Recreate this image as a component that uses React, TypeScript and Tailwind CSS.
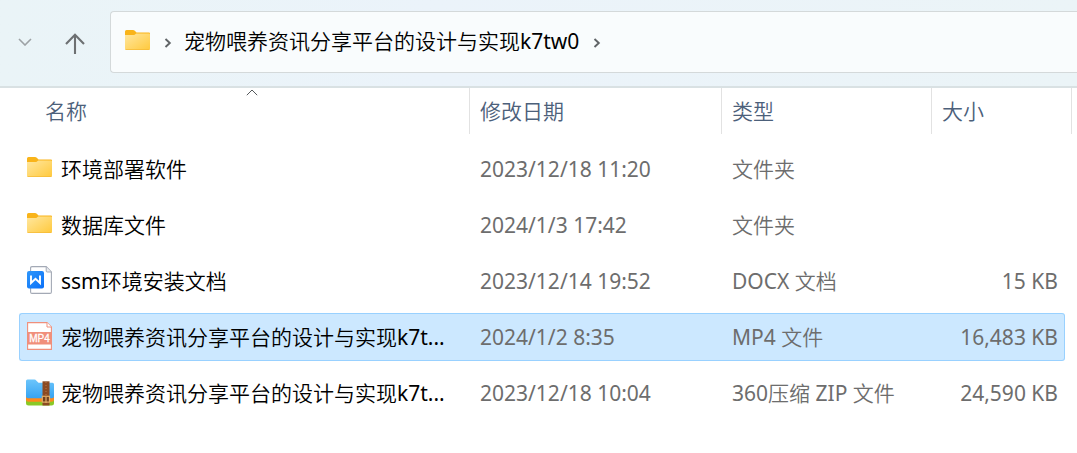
import type { ReactNode } from "react";

const FolderIcon = () => (
  <svg viewBox="0 0 25 20" className="mb-0.5 h-5 w-[25px] shrink-0" aria-hidden="true">
    <defs>
      <linearGradient id="folder-front" x1="0" y1="0" x2="1" y2="1">
        <stop offset="0" stopColor="#ffe7a0" />
        <stop offset="1" stopColor="#ffc93c" />
      </linearGradient>
    </defs>
    <path d="M0 1.5Q0 0 1.5 0H8Q9 0 9.8.8L11.5 2.5H24Q25 2.5 25 3.5V10H0Z" fill="#f9b41a" />
    <path d="M0 5H8.5Q9.3 5 10 4.4L11.2 3.5H24Q25 3.5 25 4.5V18.5Q25 20 23.5 20H1.5Q0 20 0 18.5Z" fill="url(#folder-front)" />
    <path d="M.5 19.6H24.5" stroke="#f5b935" strokeWidth=".8" />
  </svg>
);

const DocxIcon = () => (
  <svg viewBox="0 0 25 28" className="h-7 w-[25px] shrink-0" aria-hidden="true">
    <defs>
      <linearGradient id="docx-badge" x1="0" y1="0" x2="1" y2="1">
        <stop offset="0" stopColor="#2f97fb" />
        <stop offset="1" stopColor="#0a70f8" />
      </linearGradient>
    </defs>
    <path d="M5 .6H19.2L24.4 6V26Q24.4 27.4 23 27.4H5Q3.6 27.4 3.6 26V2Q3.6.6 5 .6Z" fill="#fff" stroke="#a3a9b5" strokeWidth="1.1" />
    <path d="M19.2.8V5Q19.2 6 20.2 6H24.2" fill="#e8eaef" stroke="#a3a9b5" />
    <rect x="0" y="5" width="17" height="17.5" rx="2" fill="url(#docx-badge)" />
    <path d="M4 9.5V17L8.5 12.8L13 17V9.5" fill="none" stroke="#fff" strokeWidth="1.9" />
  </svg>
);

const Mp4Icon = () => (
  <svg viewBox="0 0 25 28" className="h-7 w-[25px] shrink-0" aria-hidden="true">
    <path d="M.6.6H20L24.4 5V27.4H.6Z" fill="#fff" stroke="#f08f7b" strokeWidth="1.1" />
    <path d="M20 .6V5H24.4" fill="#fff" stroke="#f08f7b" />
    <rect x="0" y="10" width="25" height="12.5" fill="#f08f7b" />
    <text x="12.5" y="19.6" textAnchor="middle" fontSize="10" fontWeight="400" fontFamily="Liberation Sans, sans-serif" fill="#fff" stroke="#fff" strokeWidth=".3">MP4</text>
  </svg>
);

const ZipIcon = () => (
  <svg viewBox="0 0 28 27" className="-mr-0.5 -ml-px h-[27px] w-7 shrink-0" aria-hidden="true">
    <defs>
      <linearGradient id="zip-front" x1="0" y1="0" x2="0" y2="1">
        <stop offset="0" stopColor="#6cc5fb" />
        <stop offset="1" stopColor="#36a3f1" />
      </linearGradient>
    </defs>
    <path d="M0 15H28V24Q28 26.5 25.5 26.5H2.5Q0 26.5 0 24Z" fill="#8ac926" />
    <path d="M0 13H28V20.5Q28 22.8 25.5 22.8H2.5Q0 22.8 0 20.5Z" fill="#ff8a1c" />
    <path d="M0 2Q0 .5 1.5.5H8.5Q9.6.5 10.2 1.4L12.5 3.8H26.5Q28 3.8 28 5.3V17.5Q28 19.3 26 19.3H2Q0 19.3 0 17.5Z" fill="url(#zip-front)" />
    <rect x="16.5" y="2.3" width="7" height="24.2" fill="#8b4a22" />
    <path d="M20 3V16" stroke="#b87a48" strokeWidth="1" strokeDasharray="1 2" />
    <rect x="16.3" y="17.3" width="7.2" height="5.8" fill="#70401e" stroke="#e2ad68" strokeWidth="1.2" />
    <path d="M20 18V24" stroke="#e2ad68" strokeWidth="1.2" />
  </svg>
);

type Row = { icon: ReactNode; name: string; date: string; type: string; size: string; selected?: boolean };

const rows: Row[] = [
  { icon: <FolderIcon />, name: "环境部署软件", date: "2023/12/18 11:20", type: "文件夹", size: "" },
  { icon: <FolderIcon />, name: "数据库文件", date: "2024/1/3 17:42", type: "文件夹", size: "" },
  { icon: <DocxIcon />, name: "ssm环境安装文档", date: "2023/12/14 19:52", type: "DOCX 文档", size: "15 KB" },
  { icon: <Mp4Icon />, name: "宠物喂养资讯分享平台的设计与实现k7t...", date: "2024/1/2 8:35", type: "MP4 文件", size: "16,483 KB", selected: true },
  { icon: <ZipIcon />, name: "宠物喂养资讯分享平台的设计与实现k7t...", date: "2023/12/18 10:04", type: "360压缩 ZIP 文件", size: "24,590 KB" },
];

const Chevron = () => (
  <svg viewBox="0 0 8 10" className="mt-1 h-2.5 w-2 shrink-0" aria-hidden="true">
    <path d="M1.5 1L5.8 5L1.5 9" fill="none" stroke="#606467" strokeWidth="1.9" />
  </svg>
);

const heading = "flex h-[46px] w-full items-center border-r border-[#e2e2e2] pl-2.5 text-left";

export default function App() {
  return (
    <div className="min-h-screen overflow-hidden bg-white font-['Noto_Sans','Noto_Sans_CJK_SC_DemiLight','Noto_Sans_CJK_SC',sans-serif] text-[21px] leading-7 text-black">
      <header className="flex items-center border-b-2 border-[#d9e1e3] bg-linear-to-r from-[#eaf4f7] via-[#ebf3fa] via-40% to-[#ebf4f7] pt-[11px] pb-[13px] pl-[17px]">
        <button type="button" aria-label="最近浏览的位置" className="flex h-8 w-4 items-center justify-center">
          <svg viewBox="0 0 14 8" className="h-2 w-3.5 shrink-0" aria-hidden="true">
            <path d="M1 1L7 7L13 1" fill="none" stroke="#9da2a5" strokeWidth="1.6" />
          </svg>
        </button>
        <button type="button" aria-label="向上" className="ml-8 flex h-8 w-5 items-center justify-center pt-1">
          <svg viewBox="0 0 20 22" className="h-[22px] w-5 shrink-0" aria-hidden="true">
            <path d="M10 21V2M1 11L10 1.8L19 11" fill="none" stroke="#6d7072" strokeWidth="2.1" />
          </svg>
        </button>
        <nav aria-label="路径" className="ml-[25px] flex h-[62px] flex-1 items-center rounded-l border border-r-0 border-[#d4d9da] bg-[#f9fcfd] pb-0.5 pl-3.5">
          <FolderIcon />
          <span className="ml-3.5 flex"><Chevron /></span>
          <a href="#" className="ml-3 whitespace-nowrap">宠物喂养资讯分享平台的设计与实现k7tw0</a>
          <span className="ml-3.5 flex"><Chevron /></span>
        </nav>
      </header>

      <main className="pr-[5px] pl-[19px]">
        <table className="w-full table-fixed border-collapse">
          <colgroup>
            <col />
            <col className="w-[252px]" />
            <col className="w-[210px]" />
            <col className="w-[140px]" />
          </colgroup>
          <thead className="text-[#4c607a]">
            <tr className="h-[53px] align-top">
              <th scope="col" aria-sort="ascending" className="p-0 pl-4 font-normal">
                <button type="button" className={`${heading} relative`}>
                  名称
                  <svg viewBox="0 0 12 7" className="absolute top-px left-1/2 h-[7px] w-3 -translate-x-1/2" aria-hidden="true">
                    <path d="M.8 6.2L6 1L11.2 6.2" fill="none" stroke="#55595c" />
                  </svg>
                </button>
              </th>
              <th scope="col" className="p-0 font-normal"><button type="button" className={heading}>修改日期</button></th>
              <th scope="col" className="p-0 font-normal"><button type="button" className={heading}>类型</button></th>
              <th scope="col" className="p-0 font-normal"><button type="button" className={heading}>大小</button></th>
            </tr>
          </thead>
          <tbody className="text-[#6d6d6d]">
            {rows.map((row) => {
              const fill = row.selected ? "border-[#99d1ff] bg-[#cce8ff]" : "border-transparent";
              return (
                <tr key={row.date} aria-selected={row.selected}>
                  <td className="px-0 py-1">
                    <div className={`flex h-12 items-center gap-[9px] rounded-l-[3px] border border-r-0 pl-[7px] text-black ${fill}`}>
                      <span className="mb-0.5 flex">{row.icon}</span>
                      <span className="truncate">{row.name}</span>
                    </div>
                  </td>
                  <td className="px-0 py-1">
                    <div className={`flex h-12 items-center border-y pl-2.5 ${fill}`}>{row.date}</div>
                  </td>
                  <td className="px-0 py-1">
                    <div className={`flex h-12 items-center border-y pl-2.5 ${fill}`}>{row.type}</div>
                  </td>
                  <td className="py-1 pr-[7px] pl-0">
                    <div className={`flex h-12 items-center justify-end rounded-r-[3px] border border-l-0 pr-1.5 ${fill}`}>{row.size}</div>
                  </td>
                </tr>
              );
            })}
          </tbody>
        </table>
      </main>
    </div>
  );
}
